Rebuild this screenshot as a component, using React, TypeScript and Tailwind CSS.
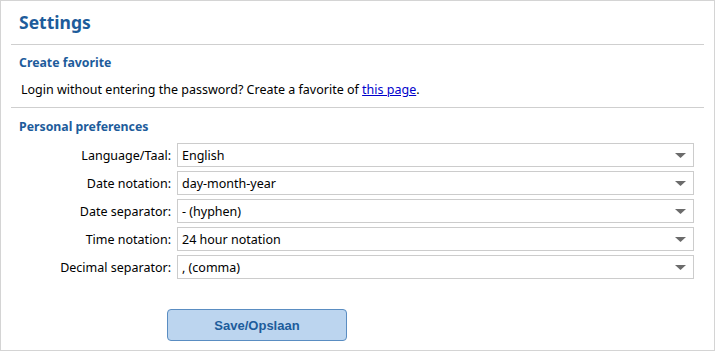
import { ChangeEvent, useState } from 'react';

const font = { fontFamily: '"Noto Sans", "Open Sans", sans-serif' };

const prefs: Array<{ id: string; label: string; options: string[] }> = [
  { id: 'lang', label: 'Language/Taal:', options: ['English', 'Nederlands'] },
  { id: 'date', label: 'Date notation:', options: ['day-month-year', 'month-day-year', 'year-month-day'] },
  { id: 'dsep', label: 'Date separator:', options: ['- (hyphen)', '/ (slash)', '. (dot)'] },
  { id: 'time', label: 'Time notation:', options: ['24 hour notation', '12 hour notation'] },
  { id: 'dec', label: 'Decimal separator:', options: [', (comma)', '. (point)'] },
];

const Arrow = () => (
  <svg className="pointer-events-none absolute right-[8px] top-[10px]" width="11" height="5" viewBox="0 0 11 5">
    <path d="M0 0h11L5.5 5z" fill="#6b6b6b" />
  </svg>
);

const App = () => {
  const [values, setValues] = useState<Record<string, string>>({
    lang: 'English',
    date: 'day-month-year',
    dsep: '- (hyphen)',
    time: '24 hour notation',
    dec: ', (comma)',
  });

  const onChange = (id: string) => (e: ChangeEvent<HTMLSelectElement>) =>
    setValues((v) => ({ ...v, [id]: e.target.value }));

  return (
    <div className="w-[715px] h-[351px] border border-[#d4d4d4] bg-white text-[12.5px] leading-[19px] text-black" style={font}>
      <h1 className="h-[43px] px-[18px] pt-[9px] text-[17.5px] leading-[24px] font-bold text-[#1d5c9b]">Settings</h1>
      <div className="mx-[10px] border-t border-[#cfcfcf]" />

      <h2 className="px-[18px] pt-[8px] h-[27px] text-[12.3px] font-bold text-[#1d5c9b]">Create favorite</h2>
      <p className="px-[20px] pt-[8px] h-[35px]">
        Login without entering the password? Create a favorite of{' '}
        <a href="#" className="text-[#0000cc] underline">
          this page
        </a>
        .
      </p>
      <div className="mx-[10px] border-t border-[#cfcfcf]" />

      <h2 className="px-[18px] pt-[9px] h-[35px] text-[12.3px] font-bold text-[#1d5c9b]">Personal preferences</h2>
      <div className="flex flex-col gap-[4px]">
        {prefs.map((p) => (
          <div key={p.id} className="flex items-center gap-[6px]">
            <label htmlFor={p.id} className="w-[170px] text-right">
              {p.label}
            </label>
            <div className="relative w-[517px]">
              <select
                id={p.id}
                value={values[p.id]}
                onChange={onChange(p.id)}
                className="h-[24px] w-full appearance-none border border-[#cccccc] bg-white pl-[4px] outline-none"
              >
                {p.options.map((o) => (
                  <option key={o}>{o}</option>
                ))}
              </select>
              <Arrow />
            </div>
          </div>
        ))}
      </div>

      <div className="pt-[30px] pl-[166px]">
        <button
          className="h-[32px] w-[180px] rounded-[4px] border border-[#5a8dc2] bg-[#bcd5ef] text-[13px] font-bold text-[#1d5c9b]"
          style={{ fontFamily: '"Liberation Sans", Arial, sans-serif' }}
        >
          Save/Opslaan
        </button>
      </div>
    </div>
  );
};

export default App;
